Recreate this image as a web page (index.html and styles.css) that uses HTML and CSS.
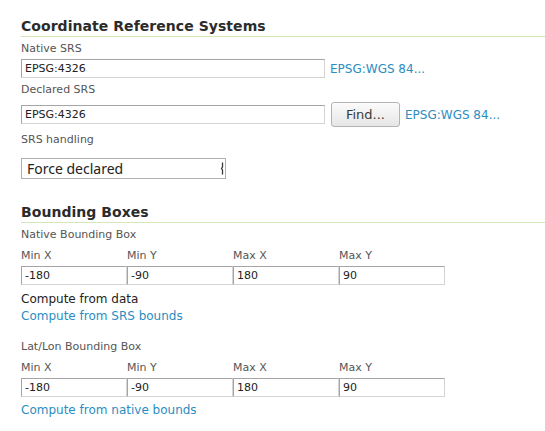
FILE: index.html
```html
<!DOCTYPE html>
<html>
<head>
<meta charset="utf-8">
<link rel="stylesheet" href="styles.css">
</head>
<body>
<div class="page">
  <h2 class="heading first">Coordinate Reference Systems</h2>
  <div class="label l-native">Native SRS</div>
  <div class="row">
    <input class="text srs" type="text" value="EPSG:4326">
    <a class="link srs-link">EPSG:WGS 84...</a>
  </div>
  <div class="label l-declared">Declared SRS</div>
  <div class="row btnrow">
    <input class="text srs" type="text" value="EPSG:4326">
    <button class="find">Find...</button>
    <a class="link srs-link">EPSG:WGS 84...</a>
  </div>
  <div class="label l-handling">SRS handling</div>
  <div class="select">
    <span>Force declared</span>
    <svg class="mark" width="4" height="13" viewBox="0 0 4 13"><path d="M2.5 0.5 V5 L1.5 6.5 L2.5 8 V12.5" fill="none" stroke="#3a3a3a" stroke-width="1.3"/></svg>
  </div>

  <h2 class="heading second">Bounding Boxes</h2>
  <div class="label l-box">Native Bounding Box</div>
  <div class="bbox">
    <div class="cell"><div class="label">Min X</div><input class="text num" type="text" value="-180"></div>
    <div class="cell"><div class="label">Min Y</div><input class="text num" type="text" value="-90"></div>
    <div class="cell"><div class="label">Max X</div><input class="text num" type="text" value="180"></div>
    <div class="cell"><div class="label">Max Y</div><input class="text num" type="text" value="90"></div>
  </div>
  <div class="actions">
    <div class="plain">Compute from data</div>
    <a class="link">Compute from SRS bounds</a>
  </div>
  <div class="label l-latlon">Lat/Lon Bounding Box</div>
  <div class="bbox">
    <div class="cell"><div class="label">Min X</div><input class="text num" type="text" value="-180"></div>
    <div class="cell"><div class="label">Min Y</div><input class="text num" type="text" value="-90"></div>
    <div class="cell"><div class="label">Max X</div><input class="text num" type="text" value="180"></div>
    <div class="cell"><div class="label">Max Y</div><input class="text num" type="text" value="90"></div>
  </div>
  <div class="actions last">
    <a class="link">Compute from native bounds</a>
  </div>
</div>
</body>
</html>
```

FILE: styles.css
```css
html, body {
  margin: 0;
  padding: 0;
  background: #fff;
}
body {
  font-family: "DejaVu Sans", Verdana, sans-serif;
  color: #222;
}
.page {
  padding: 0 0 0 21px;
}
.heading {
  margin: 0;
  font-size: 14px;
  line-height: 18px;
  font-weight: bold;
  color: #2b2b2b;
  letter-spacing: 0.05px;
  border-bottom: 1px solid #d5e6b8;
  padding-bottom: 1px;
}
.heading.first { margin-top: 17px; }
.heading.second { margin-top: 24px; }
.label {
  font-size: 11px;
  line-height: 14px;
  color: #555;
}
.l-native { margin-top: 5px; margin-bottom: 3px; }
.l-declared { margin-top: 5px; margin-bottom: 5px; }
.l-handling { margin-top: 6px; margin-bottom: 11px; }
.l-box { margin-top: 5px; }
.l-latlon { margin-top: 15px; }
.row {
  display: flex;
  align-items: center;
}
.text {
  box-sizing: border-box;
  height: 19px;
  margin: 0;
  padding: 0 3px;
  border: 1px solid;
  border-color: #a5a5a5 #d4d4d4 #d4d4d4 #a5a5a5;
  font-family: "DejaVu Sans", Verdana, sans-serif;
  font-size: 11px;
  color: #222;
  background: #fff;
  outline: none;
}
.srs { width: 304px; }
.link {
  color: #2b8dc1;
  font-size: 12px;
  text-decoration: none;
  cursor: pointer;
}
.srs-link { margin-left: 5px; }
.find {
  box-sizing: border-box;
  margin-left: 6px;
  width: 69px;
  height: 25px;
  padding: 0;
  border: 1px solid #b4b4b4;
  border-radius: 3px;
  background: linear-gradient(#fbfbfb, #e6e6e6);
  font-family: "DejaVu Sans", Verdana, sans-serif;
  font-size: 13px;
  color: #3a3a3a;
}
.select {
  box-sizing: border-box;
  width: 205px;
  height: 21px;
  border: 1px solid #b0b0b0;
  display: flex;
  align-items: center;
  justify-content: space-between;
  padding: 0 1px 0 5px;
  font-family: "Noto Sans", "Open Sans", sans-serif;
  font-size: 14px;
  color: #222;
  background: #fff;
}
.mark { display: block; }
.bbox {
  display: flex;
  margin-top: 7px;
}
.cell {
  display: flex;
  flex-direction: column;
  width: 106px;
}
.cell .label { margin-bottom: 3px; }
.num { width: 106px; }
.actions {
  display: flex;
  flex-direction: column;
  margin-top: 6px;
  font-size: 12px;
  line-height: 17px;
}
.actions.last { margin-top: 5px; }
.plain { color: #222; }
```
